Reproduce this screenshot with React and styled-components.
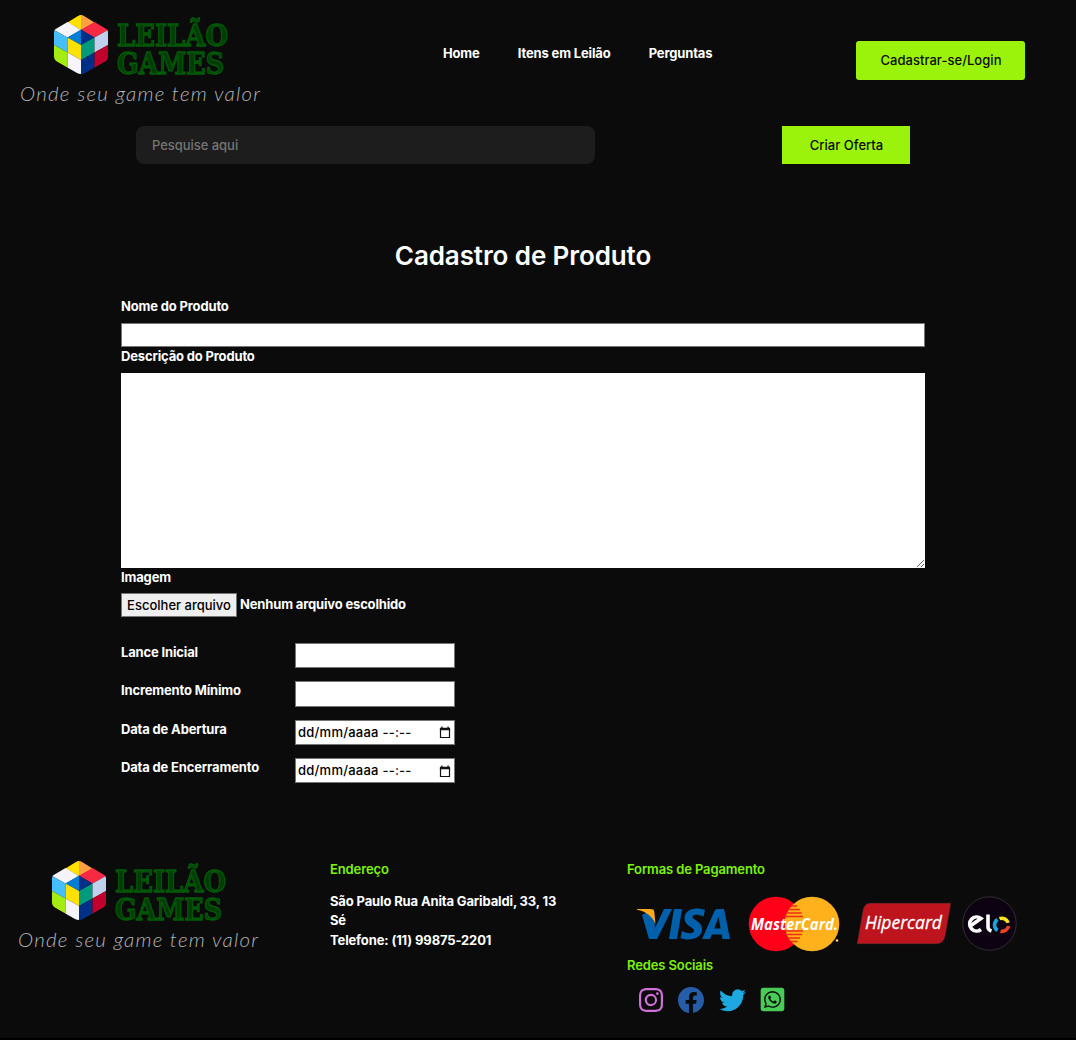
import React from "react";
import styled, { createGlobalStyle } from "styled-components";
import { BsInstagram, BsFacebook, BsTwitter } from "react-icons/bs";
import { FaWhatsappSquare } from "react-icons/fa";

const Global = createGlobalStyle`
  * { box-sizing: border-box; margin: 0; padding: 0; }
  html { background: #000; }
  body {
    background: #000;
    color: #fff;
    font: 700 13px/19.5px Inter, "Liberation Sans", sans-serif;
    letter-spacing: -0.16px;
  }
  input, textarea, button { font: inherit; }
`;

const Page = styled.div`
  height: 1038px;
  background: #0b0b0b;
  display: flex;
  flex-direction: column;
`;

const Header = styled.header`
  display: flex;
  align-items: flex-start;
  height: 126px;
  padding: 12px 51px 0 19px;
`;

const LogoSvg = styled.svg`
  display: block;
  width: 244px;
  height: 98px;
  flex: none;
`;

const Nav = styled.nav`
  display: flex;
  gap: 38.2px;
  margin: 32px 0 0 180px;
`;

const NavLink = styled.a`
  color: #fff;
  white-space: nowrap;
`;

const LimeButton = styled.button`
  width: ${(p) => p.$width}px;
  height: ${(p) => p.$height}px;
  padding: 1px 0 0 1px;
  border: 0;
  border-radius: ${(p) => p.$radius || 0}px;
  background: #9bf20b;
  color: #0b0b0b;
  font-weight: 500;
  letter-spacing: 0.03px;
`;

const LoginSlot = styled.div`
  margin: 29px 0 0 auto;
`;

const SearchRow = styled.div`
  display: flex;
  justify-content: space-between;
  height: 38px;
  margin: 0 166px 0 136px;
`;

const SearchInput = styled.input`
  width: 459px;
  height: 38px;
  padding: 0 16px;
  border: 0;
  border-radius: 8px;
  background: #1d1d1d;
  font-weight: 500;
  letter-spacing: -0.04px;
  &::placeholder { color: #757575; opacity: 1; }
`;

const Form = styled.form`
  width: 804px;
  margin: 72px 0 0 121px;
`;

const Title = styled.h1`
  font-size: 26px;
  line-height: 39px;
  font-weight: 600;
  text-align: center;
  letter-spacing: -0.1px;
`;

const Field = styled.div`
  display: flex;
  flex-direction: column;
  gap: ${(p) => p.$gap}px;
  margin-top: ${(p) => p.$top || 0}px;
`;

const Label = styled.label`
  display: block;
  color: #fff;
`;

const TextInput = styled.input`
  width: 100%;
  height: ${(p) => p.$height}px;
  border: 1px solid #767676;
  background: #fff;
`;

const TextArea = styled.textarea`
  display: block;
  height: 195px;
  border: 0;
  background: #fff;
`;

const FileRow = styled.div`
  display: flex;
  align-items: center;
  height: 24px;
  gap: 3px;
`;

const FileButton = styled.button`
  width: 116px;
  height: 24px;
  padding-top: 2px;
  border: 1px solid #767676;
  background: #efefef;
  color: #000;
  font-weight: 500;
  letter-spacing: 0;
  white-space: nowrap;
`;

const Details = styled.div`
  display: grid;
  grid-template-columns: 174px 160px;
  row-gap: 13px;
  margin-top: 26.3px;
`;

const DateBox = styled.div`
  display: flex;
  align-items: center;
  justify-content: space-between;
  height: 25.3px;
  padding: 1px 3px 0 2px;
  border: 1px solid #767676;
  background: #fff;
  color: #000;
  font-weight: 500;
  letter-spacing: 0.24px;
`;

const Footer = styled.footer`
  display: grid;
  grid-template-columns: 313px 297px 1fr;
  margin: 75px 0 0 17px;
`;

const Column = styled.section`
  padding-top: 2px;
`;

const Heading = styled.h2`
  font-size: 13px;
  line-height: 19.5px;
  font-weight: 600;
  letter-spacing: -0.12px;
  color: #7ef20b;
`;

const Address = styled.p`
  width: 240px;
  margin-top: 12.3px;
  letter-spacing: -0.14px;
`;

const Cards = styled.div`
  display: flex;
  align-items: center;
  height: 56px;
  margin: 16px 0 4px 10px;
`;

const Card = styled.svg`
  flex: none;
  margin-right: ${(p) => p.$after || 0}px;
  overflow: visible;
`;

const Socials = styled.div`
  display: flex;
  align-items: center;
  margin: 11px 0 0 12px;
  height: 27px;
  svg { display: block; flex: none; }
`;

const Social = styled.a`
  color: ${(p) => p.$color};
  margin-right: ${(p) => p.$after || 0}px;
`;

function Logo({ id }) {
  return (
    <LogoSvg viewBox="19 12 244 98" role="img" aria-label="Leilão Games">
      <defs>
        <clipPath id={id}>
          <path d="M77 16.2Q81 13.8 85 16.2L104.500 26.800Q108 28.800 108 33V56Q108 60 104.500 62L85 73Q81 75.200 77 73L57.500 62Q54 60 54 56V33Q54 28.800 57.500 26.800Z" />
        </clipPath>
      </defs>
      <g clipPath={`url(#${id})`}>
        <path fill="#ffe000" d="M81 14V30L67.500 22.500Z" />
        <path fill="#ffa143" d="M81 14V30L94.500 22.500Z" />
        <path fill="#f5f3fb" d="M67.500 22L81 30L67.500 37.500L54 30Z" />
        <path fill="#f72943" d="M94.500 22L81 30L94.500 37.500L108 30Z" />
        <path fill="#007dd5" d="M81 29.500V45L67.500 37.500Z" />
        <path fill="#002f87" d="M81 29.500V45L94.500 37.500Z" />
        <path fill="#45bfff" d="M54 30L67.500 37.500V52.500L54 45Z" />
        <path fill="#ffe100" d="M67.500 37.500L81 45V60L67.500 52.500Z" />
        <path fill="#a4ed12" d="M54 45L67.500 52.500V68L54 60Z" />
        <path fill="#f7f4fd" d="M67.500 52.500L81 60V76L67.500 68Z" />
        <path fill="#009b7c" d="M81 45L94.500 37.500V52.500L81 60Z" />
        <path fill="#c1d0ec" d="M94.500 37.500L108 30V45L94.500 52.500Z" />
        <path fill="#002f87" d="M81 60L94.500 52.500V68L81 76Z" />
        <path fill="#c2002c" d="M94.500 52.500L108 45V60L94.500 68Z" />
      </g>
      <g
        fontFamily="'DejaVu Serif', serif"
        fontWeight="700"
        fontSize="30"
        letterSpacing="0"
        fill="#003d05"
        stroke="#005c07"
        strokeWidth="1.300"
      >
        <text x="117" y="45.500" textLength="111" lengthAdjust="spacingAndGlyphs">LEILÃO</text>
        <text x="117" y="73.500" textLength="107" lengthAdjust="spacingAndGlyphs">GAMES</text>
      </g>
      <text
        x="20"
        y="100.500"
        fontFamily="Lato, sans-serif"
        fontStyle="italic"
        fontWeight="300"
        fontSize="20.500"
        letterSpacing="0"
        fill="#b4b4b4"
        textLength="240"
      >
        Onde seu game tem valor
      </text>
    </LogoSvg>
  );
}

function CalendarIcon() {
  return (
    <svg width="12" height="13" viewBox="0 0 12 13">
      <path d="M1.500 3V11.500H10.500V3" fill="none" stroke="#111" strokeWidth="1.200" />
      <path d="M.9 1.700H11.100V4.200H.9ZM2.300.5H3.600V2H2.300ZM8.400.5H9.700V2H8.400Z" fill="#111" />
    </svg>
  );
}

function DateField() {
  return (
    <DateBox>
      <span>dd/mm/aaaa --:--</span>
      <CalendarIcon />
    </DateBox>
  );
}

function Visa() {
  return (
    <Card width="93" height="32" viewBox="0 0 93 32" $after={18} aria-label="Visa">
      <path fill="#0060ab" d="M17 1L18 20L27 1H35L20 31H12L5 7Z" />
      <path fill="#0060ab" d="M37 1H45L40 31H32Z" />
      <path fill="#0060ab" d="M68 2L66.500 8.500C61 6 55.500 6 55.500 9C55.500 12 65 13 65 21C65 31 52 33.500 43.500 30L45 23C51 26 57 26 57 22.500C57 19 47.500 18 47.500 10.500C47.500 1 59 -1.500 68 2Z" />
      <path fill="#0060ab" fillRule="evenodd" d="M80 1H87L93 31H85.500L84.700 26.500H75L73 31H65L77 4Q78 1 80 1ZM81.500 9L77.200 20.500H83.600Z" />
      <path fill="#fba919" d="M0 1H13C16 1 17 2 17.300 4L18.500 16C15 8 9 3.500 0 1.800Z" />
    </Card>
  );
}

function MasterCard() {
  const lines = [10, 13.5, 17, 20.5, 35, 38.5, 42, 45.5];
  return (
    <Card width="92" height="56" viewBox="0 0 92 56" $after={17} aria-label="MasterCard">
      <circle cx="28" cy="28" r="27.300" fill="#ff0018" />
      <circle cx="64" cy="28" r="27.300" fill="#ffb11b" />
      <g stroke="#f02b16" strokeWidth="1.500">
        {lines.map((y) => {
          const half = Math.max(2, Math.sqrt(729 - (y - 28) ** 2) - 17);
          return <path key={y} d={`M${46 - half} ${y}H${46 + half}`} />;
        })}
      </g>
      <text x="3" y="33.500" fontFamily="'Open Sans', sans-serif" fontWeight="700" fontStyle="italic" fontSize="16" letterSpacing="0" fill="#fff" textLength="87" lengthAdjust="spacingAndGlyphs">
        MasterCard.
      </text>
      <circle cx="89" cy="44.500" r="1.300" fill="#ffd28a" />
    </Card>
  );
}

function Hipercard() {
  return (
    <Card width="94" height="41" viewBox="0 0 94 41" $after={11} aria-label="Hipercard">
      <path fill="#bd141e" stroke="#663034" strokeWidth=".5" d="M13 .3H93.700L88 33Q86.700 40.700 79 40.700H.3L6 8Q7.300 .3 13 .3Z" />
      <text x="8" y="26" fontFamily="'Open Sans', sans-serif" fontStyle="italic" fontWeight="500" fontSize="18.500" letterSpacing="0" fill="#fff" stroke="#fff" strokeWidth=".3" textLength="77" lengthAdjust="spacingAndGlyphs">
        Hipercard
      </text>
    </Card>
  );
}

function Elo() {
  return (
    <Card width="55" height="55" viewBox="0 0 55 55" aria-label="Elo">
      <circle cx="27.500" cy="27.500" r="26.700" fill="#0d0212" stroke="#3a383b" strokeWidth=".8" />
      <g fill="none" strokeWidth="3.600">
        <path stroke="#fff" d="M19 33.500A7 7 0 1 1 19 22.500L9 29.500" />
        <path stroke="#fff" d="M26 18.500V31Q26 34 29.500 35" />
        <path stroke="#13a5df" d="M35.500 23.500A6.600 6.600 0 0 0 35.500 34.500" />
        <path stroke="#ffe51a" d="M37.500 22.700A6.600 6.600 0 0 1 46.200 26.800" />
        <path stroke="#ee4029" d="M46.600 30A6.600 6.600 0 0 1 38.500 35.200" />
      </g>
    </Card>
  );
}

export default function App() {
  return (
    <>
      <Global />
      <Page>
        <Header>
          <Logo id="cube-header" />
          <Nav>
            <NavLink>Home</NavLink>
            <NavLink>Itens em Leilão</NavLink>
            <NavLink>Perguntas</NavLink>
          </Nav>
          <LoginSlot>
            <LimeButton $width={169} $height={39} $radius={3}>Cadastrar-se/Login</LimeButton>
          </LoginSlot>
        </Header>
        <SearchRow>
          <SearchInput placeholder="Pesquise aqui" />
          <LimeButton $width={128} $height={38}>Criar Oferta</LimeButton>
        </SearchRow>
        <Form>
          <Title>Cadastro de Produto</Title>
          <Field $gap={6.5} $top={22}>
            <Label>Nome do Produto</Label>
            <TextInput $height={24} />
          </Field>
          <Field $gap={6.5}>
            <Label>Descrição do Produto</Label>
            <TextArea />
          </Field>
          <Field $gap={5.2}>
            <Label>Imagem</Label>
            <FileRow>
              <FileButton type="button">Escolher arquivo</FileButton>
              <span>Nenhum arquivo escolhido</span>
            </FileRow>
          </Field>
          <Details>
            <Label>Lance Inicial</Label>
            <TextInput $height={25.3} />
            <Label>Incremento Mínimo</Label>
            <TextInput $height={25.3} />
            <Label>Data de Abertura</Label>
            <DateField />
            <Label>Data de Encerramento</Label>
            <DateField />
          </Details>
        </Form>
        <Footer>
          <Logo id="cube-footer" />
          <Column>
            <Heading>Endereço</Heading>
            <Address>
              São Paulo Rua Anita Garibaldi, 33, 13 Sé
              <br />
              Telefone: (11) 99875-2201
            </Address>
          </Column>
          <Column>
            <Heading>Formas de Pagamento</Heading>
            <Cards>
              <Visa />
              <MasterCard />
              <Hipercard />
              <Elo />
            </Cards>
            <Heading>Redes Sociais</Heading>
            <Socials>
              <Social $color="#d070d8" $after={15}><BsInstagram size={24} /></Social>
              <Social $color="#275da8" $after={15}><BsFacebook size={26} /></Social>
              <Social $color="#1da8e2" $after={13}><BsTwitter size={27} /></Social>
              <Social $color="#49cc57"><FaWhatsappSquare size={27} /></Social>
            </Socials>
          </Column>
        </Footer>
      </Page>
    </>
  );
}
